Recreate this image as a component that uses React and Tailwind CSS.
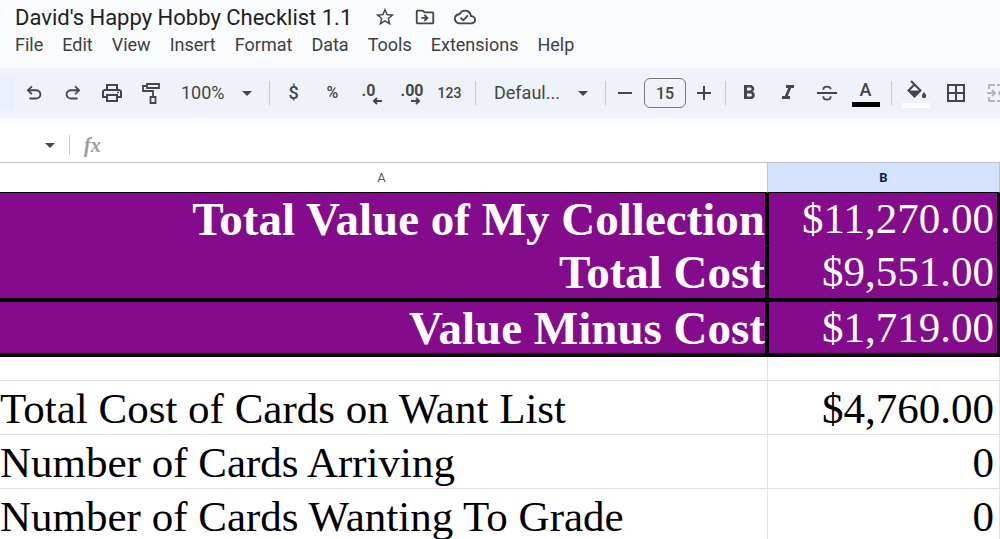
import clsx from "clsx";
import {
    MdArrowDropDown,
    MdBorderAll,
    MdFormatBold,
    MdFormatItalic,
    MdOutlineCloudDone,
    MdOutlineDriveFileMove,
    MdOutlinePrint,
    MdStarOutline,
} from "react-icons/md";

const menus = ["File", "Edit", "View", "Insert", "Format", "Data", "Tools", "Extensions", "Help"];

const UndoIcon = ({ className }) => (
    <svg viewBox="0 -960 960 960" fill="currentColor" className={className}>
        <path d="M280-200v-80h284q63 0 109.5-40T720-420q0-60-46.5-100T564-560H312l104 104-56 56-200-200 200-200 56 56-104 104h252q97 0 166.5 63T800-420q0 94-69.5 157T564-200H280Z" />
    </svg>
);

const RollerIcon = () => (
    <svg viewBox="0 0 24 24" fill="none" stroke="currentColor" strokeWidth="1.8" className="size-6">
        <path d="M8 3h12v4H8zM8 5H4v5h10v6M11.500 16h5v6h-5z" />
    </svg>
);

const StrikeIcon = () => (
    <svg viewBox="0 0 24 24" fill="none" stroke="currentColor" strokeWidth="2" className="size-[22px]">
        <path d="M1 12h22M8 8.500c0-4.500 8-4.500 8-.5M8 15.500c0 5 8 5 8 0" />
    </svg>
);

const FillIcon = () => (
    <svg viewBox="0 0 24 24" fill="none" stroke="currentColor" strokeWidth="2" className="size-6">
        <path d="M7 2l9.500 9.500-6 6-6-6L11 5" />
        <path d="M5 11.500h11l-5.500 6z" fill="currentColor" stroke="none" />
        <path d="M20 13s-2.200 2.600-2.200 4a2.200 2.200 0 0 0 4.400 0c0-1.400-2.200-4-2.200-4z" fill="currentColor" stroke="none" />
    </svg>
);

const MergeIcon = () => (
    <svg viewBox="0 0 24 24" fill="none" stroke="currentColor" strokeWidth="2" className="size-6 shrink-0">
        <path d="M12 4H6v4M6 16v4h6M20 8V4h-6M14 20h6v-4M4 12h8M9 9l3 3-3 3M23 12h-6M19 9l-3 3 3 3" />
    </svg>
);

const Arrow = ({ flip }) => (
    <svg viewBox="0 0 10 8" fill="none" stroke="currentColor" strokeWidth="2" className={clsx("absolute right-0 bottom-0 h-2 w-2.5", flip && "rotate-180")}>
        <path d="M10 4H2M5 1L2 4l3 3" />
    </svg>
);

const ToolButton = ({ label, className, children }) => (
    <button type="button" aria-label={label} className={clsx("flex h-10 shrink-0 items-center justify-center", className || "w-[39px]")}>
        {children}
    </button>
);

const Divider = ({ className }) => <div className={clsx("w-px shrink-0 bg-[#c7c9cc]", className)} />;

const ToolSelect = ({ label, value, className }) => (
    <div className={clsx("relative flex h-10 shrink-0 items-center", className)}>
        <select aria-label={label} className="w-full appearance-none bg-transparent text-lg outline-none">
            <option>{value}</option>
        </select>
        <MdArrowDropDown className="pointer-events-none absolute right-2.5 size-6" />
    </div>
);

const Header = () => (
    <header className="px-[15px] pb-[13px] font-['Roboto',sans-serif]">
        <div className="flex h-[34px] items-center text-[#444746]">
            <h1 className="text-[22px] text-[#1f1f1f]">David's Happy Hobby Checklist 1.1</h1>
            <div className="ml-[22px] flex items-center gap-[18px]">
                <button type="button" aria-label="Star"><MdStarOutline className="size-[22px]" /></button>
                <button type="button" aria-label="Move"><MdOutlineDriveFileMove className="size-[22px]" /></button>
                <button type="button" aria-label="Document status"><MdOutlineCloudDone className="size-[22px]" /></button>
            </div>
        </div>
        <nav className="flex h-[21px] items-center gap-[19px] text-lg text-[#3c4043]">
            {menus.map((menu) => (
                <button type="button" key={menu}>{menu}</button>
            ))}
        </nav>
    </header>
);

const Toolbar = () => (
    <div className="flex h-[50px] items-center overflow-hidden bg-[#eff2f8] font-['Roboto',sans-serif] text-[#444746]">
        <div className="h-[34px] w-[14px] shrink-0 bg-[#eaf0fb]" />
        <ToolButton label="Undo"><UndoIcon className="size-[22px]" /></ToolButton>
        <ToolButton label="Redo"><UndoIcon className="size-[22px] -scale-x-100" /></ToolButton>
        <ToolButton label="Print"><MdOutlinePrint className="size-6" /></ToolButton>
        <ToolButton label="Paint format"><RollerIcon /></ToolButton>
        <ToolSelect label="Zoom" value="100%" className="w-[99px] pl-[11px]" />
        <Divider className="mr-1 h-6" />

        {/* Number formats */}
        <ToolButton label="Currency" className="w-[39px] text-lg font-medium">$</ToolButton>
        <ToolButton label="Percent" className="w-[39px] text-base font-medium">%</ToolButton>
        <ToolButton label="Decrease decimal places">
            <span className="relative h-6 w-5 text-left text-base leading-5 font-bold">.0<Arrow /></span>
        </ToolButton>
        <ToolButton label="Increase decimal places">
            <span className="relative h-6 w-5 text-left text-base leading-5 font-bold">.00<Arrow flip /></span>
        </ToolButton>
        <ToolButton label="More formats" className="w-[39px] text-sm font-medium">123</ToolButton>
        <Divider className="mx-1.5 h-6" />

        <ToolSelect label="Font" value="Defaul..." className="w-[123px] pl-3" />
        <Divider className="h-6" />
        <ToolButton label="Decrease font size" className="w-[38px]">
            <span className="h-0.5 w-3.5 bg-[#444746]" />
        </ToolButton>
        <input aria-label="Font size" defaultValue="15" className="h-[30px] w-[42px] shrink-0 rounded-md border border-[#747775] text-center text-base font-medium" />
        <ToolButton label="Increase font size" className="w-[36px]">
            <svg viewBox="0 0 14 14" stroke="currentColor" strokeWidth="2" className="size-3.5"><path d="M7 0v14M0 7h14" /></svg>
        </ToolButton>
        <Divider className="mx-[3px] h-6" />

        {/* Text style */}
        <ToolButton label="Bold"><MdFormatBold className="size-6" /></ToolButton>
        <ToolButton label="Italic"><MdFormatItalic className="size-6" /></ToolButton>
        <ToolButton label="Strikethrough"><StrikeIcon /></ToolButton>
        <ToolButton label="Text color" className="w-[39px] flex-col">
            <span className="text-lg leading-5 font-medium">A</span>
            <span className="mt-0.5 h-[5px] w-7 bg-black" />
        </ToolButton>
        <Divider className="mr-1 ml-1.5 h-6" />
        <ToolButton label="Fill color" className="w-[39px] flex-col">
            <FillIcon />
            <span className="h-[5px] w-7 bg-white" />
        </ToolButton>
        <ToolButton label="Borders" className="w-[42px]"><MdBorderAll className="size-6" /></ToolButton>
        <ToolButton label="Merge cells" className="w-[36px] text-[#b4b7ba]"><MergeIcon /></ToolButton>
    </div>
);

const FormulaBar = () => (
    <div className="mt-[9px] flex h-[35px] items-center bg-white">
        <button type="button" aria-label="Name box" className="flex w-[69px] justify-end pr-[7px] text-[#444746]">
            <MdArrowDropDown className="size-6" />
        </button>
        <Divider className="h-5" />
        <label htmlFor="formula" className="pl-[14px] font-['Liberation_Serif',serif] text-xl font-bold text-[#9a9da0] italic">fx</label>
        <input id="formula" className="ml-3 min-w-0 flex-1 outline-none" />
    </div>
);

const totals = [
    { name: "Total Value of My Collection", value: "$11,270.00", height: "h-[53px]", line: "border-b border-b-[#7b0a83]" },
    { name: "Total Cost", value: "$9,551.00", height: "h-14", line: "border-b-4 border-b-black" },
    { name: "Value Minus Cost", value: "$1,719.00", height: "h-[55px]", line: "border-b-4 border-b-black" },
];

const counts = [
    { name: "Total Cost of Cards on Want List", value: "$4,760.00" },
    { name: "Number of Cards Arriving", value: "0" },
    { name: "Number of Cards Wanting To Grade", value: "0" },
];

const Sheet = () => (
    <table className="w-full table-fixed border-separate border-spacing-0 bg-white font-['Georgia','Liberation_Serif',serif] text-[43px] leading-[48px] whitespace-nowrap">
        <thead className="font-['Roboto',sans-serif] text-[13px] leading-4">
            <tr className="h-[31px]">
                <th className="w-[76.8%] border-t border-r border-b border-t-[#c0c3c7] border-r-[#c0c3c7] border-b-black pr-1 font-normal text-[#575b5f]">A</th>
                <th className="border-t border-r border-b border-t-[#c0c3c7] border-r-[#c0c3c7] border-b-black bg-[#d3e3fd] font-bold text-[#041e49]">B</th>
            </tr>
        </thead>
        <tbody>
            {totals.map((row) => (
                <tr key={row.name} className={clsx(row.height, "bg-[#840b8c] text-white")}>
                    <td className={clsx("border-r-[3px] border-r-black p-0 text-right text-[47px] font-bold", row.line)}>{row.name}</td>
                    <td className={clsx("border-r-[3px] border-l border-r-black border-l-black p-0 pr-[3px] text-right", row.line)}>{row.value}</td>
                </tr>
            ))}
            <tr className="h-6">
                <td className="border-r border-b border-[#e1e1e1] p-0" />
                <td className="border-r border-b border-[#e1e1e1] p-0" />
            </tr>
            {counts.map((row) => (
                <tr key={row.name} className="h-[54px]">
                    <td className="border-r border-b border-[#e1e1e1] p-0 pt-0.5">{row.name}</td>
                    <td className="border-r border-b border-[#e1e1e1] p-0 pt-0.5 pr-[5px] text-right">{row.value}</td>
                </tr>
            ))}
        </tbody>
    </table>
);

const App = () => {
    return (
        <div className="h-screen overflow-hidden bg-[#f9fbfd]">
            <Header />
            <Toolbar />
            <FormulaBar />
            <Sheet />
        </div>
    );
};

export default App;
